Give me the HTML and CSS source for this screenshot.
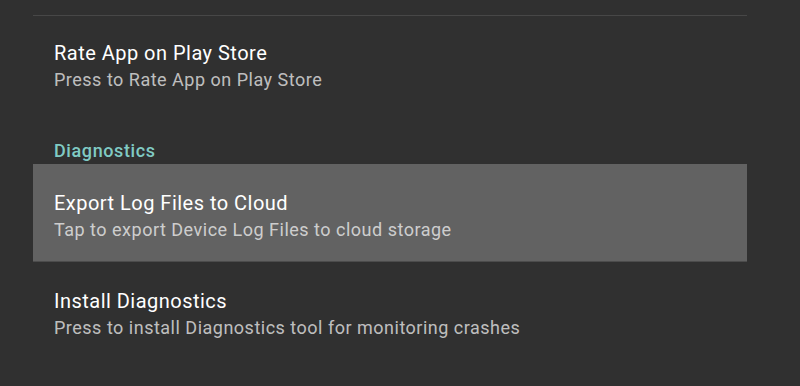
FILE: index.html
```html
<!DOCTYPE html>
<html>
<head>
<meta charset="utf-8">
<link rel="stylesheet" href="styles.css">
</head>
<body>
<div class="list">
  <div class="divider"></div>
  <div class="item first">
    <div class="title">Rate App on Play Store</div>
    <div class="summary">Press to Rate App on Play Store</div>
  </div>
  <div class="category">Diagnostics</div>
  <div class="item selected">
    <div class="title">Export Log Files to Cloud</div>
    <div class="summary">Tap to export Device Log Files to cloud storage</div>
  </div>
  <div class="item">
    <div class="title">Install Diagnostics</div>
    <div class="summary">Press to install Diagnostics tool for monitoring crashes</div>
  </div>
</div>
</body>
</html>
```

FILE: styles.css
```css
html, body {
  margin: 0;
  padding: 0;
  background: #303030;
  height: 100%;
  overflow: hidden;
}
body {
  font-family: Roboto, "Liberation Sans", sans-serif;
}
.list {
  margin-left: 33px;
  width: 714px;
  padding-top: 15px;
}
.divider {
  height: 1px;
  background: #474747;
}
.item {
  box-sizing: border-box;
  height: 98px;
  padding: 27px 0 0 21px;
}
.item.first {
  margin-top: -2px;
}
.item.selected {
  background: #626262;
  border-bottom: 1px solid #4c4c4c;
}
.title {
  font-size: 20px;
  line-height: 24px;
  letter-spacing: 0.48px;
  color: #ffffff;
}
.summary {
  margin-top: 4px;
  font-size: 18px;
  line-height: 22px;
  letter-spacing: 0.5px;
  color: rgba(255, 255, 255, 0.7);
}
.category {
  padding: 28px 0 2px 21px;
  font-size: 18px;
  line-height: 22px;
  letter-spacing: 0.6px;
  font-weight: 500;
  color: #80cbc4;
}
```
